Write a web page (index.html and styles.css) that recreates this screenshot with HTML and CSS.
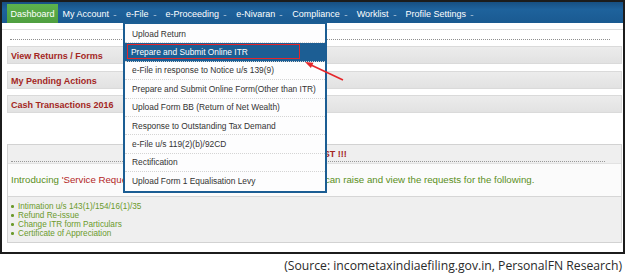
FILE: index.html
```html
<!DOCTYPE html>
<html lang="en">
<head>
    <meta charset="UTF-8">
    <meta name="viewport" content="width=device-width, initial-scale=1.0">
    <title>e-Filing Dashboard</title>
    <link rel="stylesheet" href="styles.css">
</head>
<body>
    <div class="frame">
        <!-- Barra de menu -->
        <nav class="topnav">
            <a class="tab tab-active">Dashboard</a>
            <a class="tab">My Account<i class="caret"></i></a>
            <a class="tab">e-File<i class="caret"></i></a>
            <a class="tab">e-Proceeding<i class="caret"></i></a>
            <a class="tab">e-Nivaran<i class="caret"></i></a>
            <a class="tab">Compliance<i class="caret"></i></a>
            <a class="tab">Worklist<i class="caret"></i></a>
            <a class="tab">Profile Settings<i class="caret"></i></a>
        </nav>

        <!-- Conteúdo -->
        <div class="content">
            <div class="dots"></div>
            <div class="panel-title">View Returns / Forms</div>
            <div class="panel-title">My Pending Actions</div>
            <div class="panel-title">Cash Transactions 2016</div>

            <div class="notice">
                <div class="notice-head">
                    <div class="notice-head-line">SERVICE REQUEST !!!</div>
                </div>
                <p class="notice-intro">Introducing <span class="red">'Service Request'</span> - A new functionality wherein the taxpayers can raise and view the requests for the following.</p>
                <ul class="notice-list">
                    <li>Intimation u/s 143(1)/154/16(1)/35</li>
                    <li>Refund Re-issue</li>
                    <li>Change ITR form Particulars</li>
                    <li>Certificate of Appreciation</li>
                </ul>
            </div>
        </div>

        <!-- Submenu e-File aberto -->
        <ul class="dropdown">
            <li>Upload Return</li>
            <li class="selected"><span class="mark">Prepare and Submit Online ITR</span></li>
            <li>e-File in response to Notice u/s 139(9)</li>
            <li>Prepare and Submit Online Form(Other than ITR)</li>
            <li>Upload Form BB (Return of Net Wealth)</li>
            <li>Response to Outstanding Tax Demand</li>
            <li>e-File u/s 119(2)(b)/92CD</li>
            <li>Rectification</li>
            <li>Upload Form 1 Equalisation Levy</li>
        </ul>

        <svg class="pointer" width="50" height="30" viewBox="0 0 50 30">
            <line x1="43" y1="25" x2="10" y2="9.5" stroke="#e5262a" stroke-width="1.6"/>
            <polygon points="5,7 13.5,7.7 10.9,13.1" fill="#e5262a"/>
        </svg>
    </div>

    <p class="source">(Source: incometaxindiaefiling.gov.in, PersonalFN Research)</p>
</body>
</html>
```

FILE: styles.css
```css
/* Reset */
* {
    margin: 0;
    padding: 0;
    box-sizing: border-box;
}

body {
    font-family: "Liberation Sans", Arial, sans-serif;
    background-color: #fff;
    color: #333;
}

.frame {
    position: relative;
    width: 625px;
    height: 254px;
    border: 2px solid #1c1c1c;
    overflow: hidden;
    background-color: #fff;
}

/* Menu */
.topnav {
    display: flex;
    align-items: flex-end;
    height: 21px;
    padding-left: 5px;
    background: linear-gradient(to bottom, #174f82, #1e629c 35%, #1a5a91);
}

.tab {
    display: flex;
    align-items: center;
    height: 19px;
    padding: 0 4.5px;
    color: #fff;
    font-size: 9px;
    white-space: nowrap;
}

.tab-active {
    padding: 0 3.5px;
    background: linear-gradient(to bottom, #5db24d, #4f9f40);
}

.caret {
    display: inline-block;
    margin-left: 4px;
    margin-top: 4px;
    border-left: 2px solid transparent;
    border-right: 2px solid transparent;
    border-top: 1.5px solid #b9cadb;
}

/* Painel */
.content {
    margin-top: 6px;
    border-top: 1px solid #dedede;
    padding: 9px 1px 0 5px;
}

.dots {
    margin: 0 12px 6px 3px;
    border-top: 1px dotted #8f8f8f;
}

.panel-title {
    height: 18px;
    margin-bottom: 6.5px;
    padding-left: 3px;
    line-height: 18px;
    font-size: 9px;
    font-weight: bold;
    color: #a4271f;
    background: linear-gradient(to bottom, #ececec, #e2e2e2);
    border: 1px solid #dadada;
}

.notice {
    margin-top: 31px;
    border: 1px solid #d2d2d2;
    background-color: #efefef;
}

.notice-head {
    padding: 0 16px 1px 3px;
}

.notice-head-line {
    height: 17px;
    line-height: 18px;
    padding-left: 239px;
    border-bottom: 1px dotted #999;
    font-size: 9px;
    font-weight: bold;
    color: #a4271f;
}

.notice-intro {
    padding: 10px 3px;
    line-height: 12px;
    font-size: 9.7px;
    color: #5a8f22;
    background-color: #fbfbfb;
    border-top: 1px solid #e2e2e2;
    border-bottom: 1px solid #d6d6d6;
    white-space: nowrap;
}

.red {
    color: #b3261e;
}

.notice-list {
    list-style: none;
    padding: 4.5px 0 4px 10px;
}

.notice-list li {
    position: relative;
    line-height: 9px;
    font-size: 8.2px;
    color: #6b9a2c;
}

.notice-list li::before {
    content: "";
    position: absolute;
    left: -7px;
    top: 3.5px;
    width: 2.5px;
    height: 2.5px;
    border-radius: 50%;
    background-color: #6b9a2c;
}

/* Submenu */
.dropdown {
    position: absolute;
    left: 121px;
    top: 20px;
    width: 204px;
    padding-top: 1px;
    list-style: none;
    background-color: #fdfdfe;
    border: 2px solid #1b5d93;
}

.dropdown li {
    display: flex;
    align-items: center;
    height: 18.4px;
    padding-left: 7px;
    border-bottom: 1px dotted #d4d4d4;
    font-size: 8.4px;
    color: #333;
    white-space: nowrap;
}

.dropdown li:last-child {
    border-bottom: none;
}

.dropdown .selected {
    align-items: flex-start;
    padding: 1px 0 0 2px;
    background-color: #1c5e94;
    color: #fff;
}

.mark {
    display: flex;
    align-items: center;
    width: 173px;
    height: 15px;
    padding-left: 3px;
    border: 1.5px solid #e3262b;
}

.pointer {
    position: absolute;
    left: 298px;
    top: 53px;
}

/* Legenda */
.source {
    margin-top: 4px;
    padding-right: 4px;
    text-align: right;
    font-family: "Open Sans", sans-serif;
    font-size: 12.2px;
    line-height: 16px;
    color: #2a2a2a;
}
```
